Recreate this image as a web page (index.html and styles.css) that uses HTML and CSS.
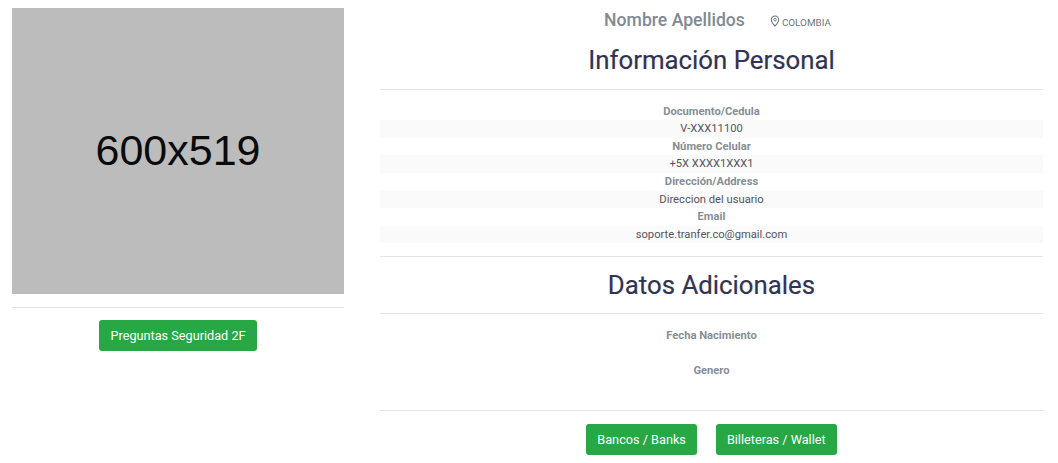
FILE: index.html
```html
<!DOCTYPE html>
<html lang="es">
<head>
<meta charset="utf-8">
<title>Perfil</title>
<link rel="stylesheet" href="styles.css">
</head>
<body>
<div class="page">
  <aside class="left">
    <div class="photo">600x519</div>
    <hr class="rule rule-left">
    <div class="actions"><a class="btn">Preguntas Seguridad 2F</a></div>
  </aside>
  <main class="right">
    <div class="who">
      <span class="name">Nombre Apellidos</span>
      <span class="place">
        <svg class="pin" viewBox="0 0 12 14" width="10" height="12" aria-hidden="true"><path d="M6 1a4.400 4.400 0 0 0-4.400 4.400C1.600 8.500 6 13 6 13s4.400-4.500 4.400-7.600A4.400 4.400 0 0 0 6 1z" fill="none" stroke="#6c757d" stroke-width="1.300"/><circle cx="6" cy="5.400" r="1.600" fill="none" stroke="#6c757d" stroke-width="1.100"/></svg>
        COLOMBIA
      </span>
    </div>
    <h3 class="title">Información Personal</h3>
    <hr class="rule">
    <div class="fields">
      <div class="label">Documento/Cedula</div>
      <div class="value">V-XXX11100</div>
      <div class="label">Número Celular</div>
      <div class="value">+5X XXXX1XXX1</div>
      <div class="label">Dirección/Address</div>
      <div class="value">Direccion del usuario</div>
      <div class="label">Email</div>
      <div class="value">soporte.tranfer.co@gmail.com</div>
    </div>
    <hr class="rule rule-mid">
    <h3 class="title title-2">Datos Adicionales</h3>
    <hr class="rule">
    <div class="fields">
      <div class="label">Fecha Nacimiento</div>
      <div class="value blank"></div>
      <div class="label">Genero</div>
      <div class="value blank"></div>
    </div>
    <hr class="rule rule-end">
    <div class="actions actions-row">
      <a class="btn">Bancos / Banks</a>
      <a class="btn">Billeteras / Wallet</a>
    </div>
  </main>
</div>
</body>
</html>
```
FILE: styles.css
```css
* { box-sizing: border-box; }
html, body { margin: 0; padding: 0; background: #fff; }
body {
  font-family: Roboto, "Liberation Sans", sans-serif;
  font-size: 11px;
  color: #4b4b5a;
  overflow: hidden;
}
.page {
  display: flex;
  align-items: flex-start;
  width: 1058px;
  height: 463px;
  padding: 8px 15px 0 12px;
  gap: 36px;
}
.left { width: 332px; flex: none; }
.right { flex: 1; min-width: 0; margin-top: -8px; text-align: center; }
.photo {
  height: 286px;
  background: #bcbcbc;
  color: #0a0a0a;
  font-family: "Liberation Sans", Arial, sans-serif;
  font-size: 43px;
  display: flex;
  align-items: center;
  justify-content: center;
  padding-bottom: 2px;
}
.rule { border: 0; border-top: 1px solid #e4e4e7; margin: 0; }
.rule-left { margin-top: 13px; }
.actions { display: flex; justify-content: center; margin-top: 12px; }
.actions-row { gap: 19px; margin-top: 13px; }
.btn {
  display: block;
  height: 31px;
  line-height: 31px;
  padding: 0 11px;
  background: #28a745;
  color: #fff;
  font-size: 12.700px;
  border-radius: 3px;
}
.who {
  height: 40px;
  display: flex;
  align-items: center;
  justify-content: center;
  gap: 25px;
  padding-left: 12px;
  color: #7b8794;
}
.name { font-size: 17.600px; font-weight: 500; color: #808a94; margin-top: -1px; }
.place { font-size: 9.900px; color: #6c757d; padding-top: 4px; display: inline-flex; align-items: center; gap: 2px; }
.pin { margin-top: -2px; }
.title {
  margin: 0;
  height: 49px;
  line-height: 40px;
  font-size: 25.800px;
  font-weight: 400;
  color: #313354;
  -webkit-text-stroke: 0.200px #313354;
}
.title-2 { height: 56px; line-height: 56px; }
.fields { padding-top: 12.700px; }
.label, .value { height: 17.600px; line-height: 17.600px; font-size: 11.200px; }
.label { font-weight: 700; color: #868e96; }
.value { background: #fafafa; color: #55555f; }
.value.blank { background: transparent; }
.rule-mid { margin-top: 12.800px; }
.rule-end { margin-top: 12.800px; }
```
